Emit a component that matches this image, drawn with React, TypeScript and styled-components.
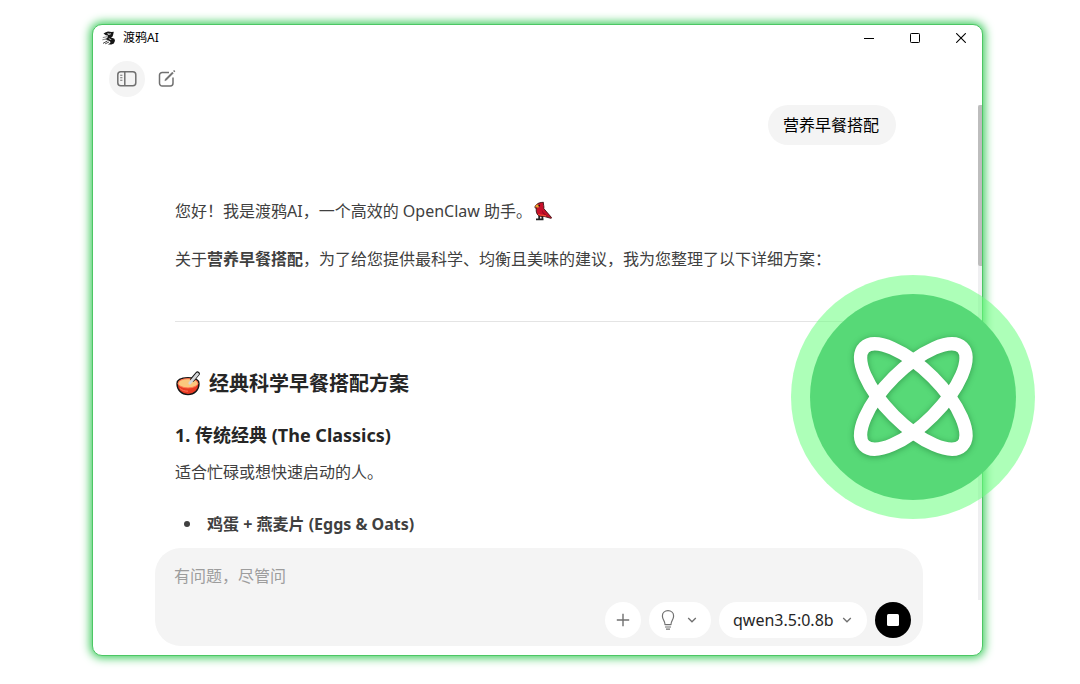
import React from "react";
import styled, { createGlobalStyle } from "styled-components";

const GlobalStyle = createGlobalStyle`
  *, *::before, *::after { box-sizing: border-box; }
  body { margin: 0; background: #fff; }
  body, button, textarea, select {
    font-family: "Noto Sans", "Noto Sans CJK SC", sans-serif;
  }
  button, textarea, select { border: 0; margin: 0; padding: 0; background: none; }
  svg { display: block; flex: none; }
`;

const Page = styled.main`
  position: relative;
  display: flex;
  min-height: 100vh;
  padding: 24px 97px 28px 92px;
  overflow: hidden;
`;

const AppWindow = styled.section`
  flex: 1;
  min-width: 0;
  display: flex;
  flex-direction: column;
  background: #fff;
  border: 1px solid #4cc764;
  border-radius: 10px;
  box-shadow: 0 0 10px 2px #3ccb5c;
`;

const TitleBar = styled.header`
  display: flex;
  align-items: center;
  justify-content: space-between;
  height: 26px;
  padding-left: 9px;
`;

const Brand = styled.h1`
  display: flex;
  align-items: center;
  gap: 7px;
  margin: 0;
  font-size: 12px;
  line-height: 16px;
  font-weight: 400;
  color: #000;
`;

const WindowControls = styled.div`
  display: flex;
  margin-right: -2px;
`;

const WindowButton = styled.button`
  display: grid;
  place-items: center;
  width: 46px;
  height: 24px;
  color: #000;
`;

const Toolbar = styled.nav`
  display: flex;
  gap: 4px;
  padding: 10px 16px 8px;
`;

const RoundButton = styled.button<{ $bg?: string; $color?: string }>`
  display: grid;
  place-items: center;
  width: 36px;
  height: 36px;
  border-radius: 18px;
  background: ${(p) => p.$bg ?? "transparent"};
  color: ${(p) => p.$color ?? "#707070"};
`;

const Body = styled.div`
  flex: 1;
  display: flex;
`;

const Column = styled.div`
  flex: 1;
  min-width: 0;
  display: flex;
  flex-direction: column;
`;

const Track = styled.div`
  width: 4px;
  margin-bottom: 55px;
  background: #efeff1;
`;

const Thumb = styled.div`
  height: 161px;
  border-radius: 2px 0 0 2px;
  background: #bdbdbd;
`;

const Conversation = styled.div`
  flex: 1;
  padding: 0 82px 10px;
  font-size: 16px;
  line-height: 28px;
  color: #404040;
`;

const Bubble = styled.p`
  width: fit-content;
  margin: 0 0 52px auto;
  padding: 6px 17px 6px 15px;
  border-radius: 20px;
  background: #f4f4f4;
  color: #000;
`;

const Paragraph = styled.p`
  display: flex;
  align-items: center;
  gap: 1px;
  margin: 0 0 20px;
`;

const Text = styled.p`
  margin: 0 0 24px;
`;

const Rule = styled.hr`
  height: 1px;
  margin: 48px 0;
  border: 0;
  background: #e4e4e4;
`;

const Strong = styled.strong`
  font-weight: 700;
`;

const PlanTitle = styled.h2`
  display: flex;
  align-items: center;
  gap: 8px;
  margin: 0 0 23px;
  font-size: 20px;
  line-height: 28px;
  font-weight: 700;
  color: #262626;
`;

const OptionTitle = styled.h3`
  margin: 0 0 9px;
  font-size: 18px;
  line-height: 28px;
  font-weight: 700;
  color: #262626;
`;

const List = styled.ul`
  margin: 0;
  padding: 0;
  list-style: none;
`;

const Item = styled.li`
  display: flex;
  align-items: center;
  gap: 17px;
  padding-left: 9px;
  font-weight: 700;
  &::before {
    content: "";
    width: 6px;
    height: 6px;
    border-radius: 50%;
    background: #404040;
  }
`;

const Composer = styled.form`
  display: flex;
  flex-direction: column;
  gap: 14px;
  margin: 0 55px 9px 62px;
  padding: 16px 12px 8px 19px;
  border-radius: 26px;
  background: #f4f4f4;
`;

const Prompt = styled.textarea`
  display: block;
  width: 100%;
  height: 24px;
  resize: none;
  outline: 0;
  overflow: hidden;
  font-size: 16px;
  line-height: 24px;
  color: #262626;
  &::placeholder { color: #9d9d9d; opacity: 1; }
`;

const Actions = styled.div`
  display: flex;
  justify-content: flex-end;
  gap: 8px;
`;

const PillButton = styled.button`
  display: flex;
  align-items: center;
  justify-content: space-between;
  width: 62px;
  height: 36px;
  padding: 0 14px 0 12px;
  border-radius: 18px;
  background: #fff;
  color: #707070;
`;

const ModelPicker = styled.label`
  display: flex;
  align-items: center;
  height: 36px;
  width: 148px;
  padding: 0 15px 0 14px;
  border-radius: 18px;
  background: #fff;
  color: #707070;
`;

const ModelSelect = styled.select`
  appearance: none;
  flex: 1;
  min-width: 0;
  height: 36px;
  outline: 0;
  font-size: 16px;
  color: #262626;
`;

const Badge = styled.div`
  position: absolute;
  top: 275px;
  right: 45px;
  display: grid;
  place-items: center;
  width: 244px;
  height: 244px;
  border-radius: 50%;
  background: rgba(106, 255, 126, 0.55);
`;

const BadgeDisc = styled.div`
  display: grid;
  place-items: center;
  width: 206px;
  height: 206px;
  border-radius: 50%;
  background: #57d977;
  svg { filter: drop-shadow(0 1px 3px rgba(0, 70, 20, 0.4)); }
`;

const RavenLogo = () => (
  <svg width="14" height="14" viewBox="0 0 14 14" aria-hidden="true">
    <path d="M1.500 2.600 3.800 1.200 6 .6 9.600 1l2.200-.2-.6 2.600-.6 2L9 6.400l3.400 1.400.6 2-1.200 2.600-2.400 1.200-3.400-.2 2.400-1.600-.2-1.400L5 8.800 3.200 8.200 5.600 6.400 5.800 4.600 3.800 4.200Z" fill="#161616" />
    <path d="M5 2.400 8.800 2.200 8.200 3.800 6.400 3.700ZM6.200 7 9.800 8.400 8 8.800Z" fill="#fff" />
    <path d="M6.800 2.400h1.100v.9H6.800Z" fill="#161616" />
    <path d="M.8 6.600 5.400 5.600M.4 8.800 5 7.800" stroke="#777" strokeWidth=".9" />
    <path d="M1 12.400 5.600 9.800M3.200 12.800 7 11" stroke="#444" strokeWidth="1" />
  </svg>
);

const SidebarIcon = () => (
  <svg width="20" height="16" viewBox="0 0 20 16" fill="none" stroke="currentColor" strokeWidth="1.500" aria-hidden="true">
    <rect x=".8" y=".8" width="18" height="14" rx="3" />
    <path d="M7.800.8v14" />
    <path d="M3.200 4.200h2.200M3.200 6.700h2.200M3.200 9.200h2.200" strokeWidth="1.100" />
  </svg>
);

const ComposeIcon = () => (
  <svg width="18" height="18" viewBox="0 0 18 18" fill="none" stroke="currentColor" strokeWidth="1.500" aria-hidden="true">
    <path d="M11 2.400H4.200A2.700 2.700 0 0 0 1.500 5.100v8.200A2.700 2.700 0 0 0 4.200 16h8.100a2.700 2.700 0 0 0 2.700-2.700V7.400" />
    <path d="m6.800 10.800.5-1.700 7-7 1.100 1.100-7 7Z" fill="currentColor" strokeWidth=".4" />
    <path d="m15.700 1.700 1-1" strokeWidth="1.800" />
  </svg>
);

const MinimizeIcon = () => (
  <svg width="10" height="10" viewBox="0 0 10 10" stroke="currentColor" aria-hidden="true">
    <path d="M0 5.500h10" />
  </svg>
);

const MaximizeIcon = () => (
  <svg width="10" height="10" viewBox="0 0 10 10" fill="none" stroke="currentColor" aria-hidden="true">
    <rect x=".5" y=".5" width="9" height="9" rx=".8" />
  </svg>
);

const CloseIcon = () => (
  <svg width="10" height="10" viewBox="0 0 10 10" stroke="currentColor" strokeWidth="1.100" aria-hidden="true">
    <path d="m.2.2 9.600 9.600m0-9.600L.2 9.800" />
  </svg>
);

const ParrotEmoji = () => (
  <svg width="20" height="20" viewBox="0 0 20 20" role="img" aria-label="鹦鹉">
    <path d="M6.200 14.500v3.200M9.400 14.500v3.200M3 18.400h7.500" stroke="#222" strokeWidth="1.800" />
    <path d="M10.400 1.300C7.400 1.400 4.200 2.100 3.400 4 2 4.600 1.700 6 2.300 7.200l1.200-.6C2.800 9.600 3.200 13 5.600 14.700c2.200 1.200 4.600.6 6.200.9l6 1.700c.8.100 1-.5.5-1L10.800 7.600c.5-2.300-.6-3.900-.4-6.300Z" fill="#c8102a" stroke="#3a1212" strokeWidth=".9" strokeLinejoin="round" />
    <path d="M4 3.600 6.400 4 5.400 6.800 3.600 6.200 2.500 6.600C2.200 5.400 2.700 4.200 4 3.600Z" fill="#eda52c" />
    <circle cx="6.200" cy="4.600" r=".9" fill="#1c1212" />
    <path d="M8.800 8.600c1 2.600 3.200 4.800 7 6.800-4-.4-7.200-2.200-7-6.800Z" fill="#9c0a20" />
    <path d="M5.200 13.200c2.600 1.200 5.200 1 8 1.700" stroke="#f04a2e" strokeWidth="1.200" fill="none" />
  </svg>
);

const BowlEmoji = () => (
  <svg width="26" height="26" viewBox="0 0 26 26" role="img" aria-label="碗">
    <path d="M2 12.800C2 9 6.200 6.800 13 6.800s11 2.200 11 6c0 6.200-4.600 10.800-11 10.800S2 19 2 12.800Z" fill="#e83a22" stroke="#151515" strokeWidth="1.400" />
    <ellipse cx="13" cy="12.300" rx="9.900" ry="4.600" fill="#fbc77d" stroke="#ff7a55" strokeWidth="1" />
    <path d="M5 17.500c2 2 5 2.700 8 2.700" stroke="#ff7658" strokeWidth="1" fill="none" />
    <path d="m17.600 8.400 4.900-5.600" stroke="#151515" strokeWidth="4.600" strokeLinecap="round" />
    <path d="m14.800 12.200 7.700-9.200" stroke="#d4d6d8" strokeWidth="2.800" strokeLinecap="round" />
  </svg>
);

const PlusIcon = () => (
  <svg width="14" height="14" viewBox="0 0 14 14" stroke="currentColor" strokeWidth="1.400" aria-hidden="true">
    <path d="M7 .8v12.400M.8 7h12.400" />
  </svg>
);

const BulbIcon = () => (
  <svg width="14" height="20" viewBox="0 0 14 20" fill="none" stroke="currentColor" strokeWidth="1.200" aria-hidden="true">
    <path d="M4 14.600C4 10.800 1.400 9.800 1.400 5.900 1.400 2.800 3.800.7 7 .7s5.600 2.100 5.600 5.200c0 3.900-2.600 4.900-2.600 8.700Z" strokeLinejoin="round" />
    <path d="M4 17h6M5 19.200h4" />
  </svg>
);

const ChevronIcon = () => (
  <svg width="10" height="6" viewBox="0 0 10 6" fill="none" stroke="currentColor" strokeWidth="1.300" aria-hidden="true">
    <path d="m1.200 1 3.800 3.800L8.800 1" />
  </svg>
);

const StopIcon = () => (
  <svg width="12" height="12" viewBox="0 0 12 12" aria-hidden="true">
    <rect width="12" height="12" rx="1.500" fill="currentColor" />
  </svg>
);

const OrbitLogo = () => (
  <svg width="136" height="136" viewBox="-68.300 -67.500 136 136" fill="none" stroke="#fff" strokeWidth="13.200" aria-hidden="true">
    <ellipse rx="69.300" ry="27.300" transform="rotate(45)" />
    <ellipse rx="69.300" ry="27.300" transform="rotate(-45)" />
  </svg>
);

export default function App() {
  return (
    <>
      <GlobalStyle />
      <Page>
        <AppWindow>
          <TitleBar>
            <Brand><RavenLogo />渡鸦AI</Brand>
            <WindowControls>
              <WindowButton aria-label="最小化"><MinimizeIcon /></WindowButton>
              <WindowButton aria-label="最大化"><MaximizeIcon /></WindowButton>
              <WindowButton aria-label="关闭"><CloseIcon /></WindowButton>
            </WindowControls>
          </TitleBar>
          <Toolbar>
            <RoundButton $bg="#f4f4f4" aria-label="侧边栏"><SidebarIcon /></RoundButton>
            <RoundButton aria-label="新对话"><ComposeIcon /></RoundButton>
          </Toolbar>
          <Body>
            <Column>
              <Conversation>
                <Bubble>营养早餐搭配</Bubble>
                <Paragraph>您好！我是渡鸦AI，一个高效的 OpenClaw 助手。<ParrotEmoji /></Paragraph>
                <Text>关于<Strong>营养早餐搭配</Strong>，为了给您提供最科学、均衡且美味的建议，我为您整理了以下详细方案：</Text>
                <Rule />
                <PlanTitle><BowlEmoji />经典科学早餐搭配方案</PlanTitle>
                <OptionTitle>1. 传统经典 (The Classics)</OptionTitle>
                <Text>适合忙碌或想快速启动的人。</Text>
                <List>
                  <Item>鸡蛋 + 燕麦片 (Eggs &amp; Oats)</Item>
                </List>
              </Conversation>
              <Composer onSubmit={(e) => e.preventDefault()}>
                <Prompt aria-label="提问" rows={1} placeholder="有问题，尽管问" />
                <Actions>
                  <RoundButton type="button" $bg="#fff" aria-label="添加"><PlusIcon /></RoundButton>
                  <PillButton type="button" aria-label="思考模式"><BulbIcon /><ChevronIcon /></PillButton>
                  <ModelPicker>
                    <ModelSelect aria-label="模型" defaultValue="qwen3.5:0.8b">
                      <option>qwen3.5:0.8b</option>
                    </ModelSelect>
                    <ChevronIcon />
                  </ModelPicker>
                  <RoundButton type="button" $bg="#000" $color="#fff" aria-label="停止"><StopIcon /></RoundButton>
                </Actions>
              </Composer>
            </Column>
            <Track><Thumb /></Track>
          </Body>
        </AppWindow>
        <Badge>
          <BadgeDisc><OrbitLogo /></BadgeDisc>
        </Badge>
      </Page>
    </>
  );
}
